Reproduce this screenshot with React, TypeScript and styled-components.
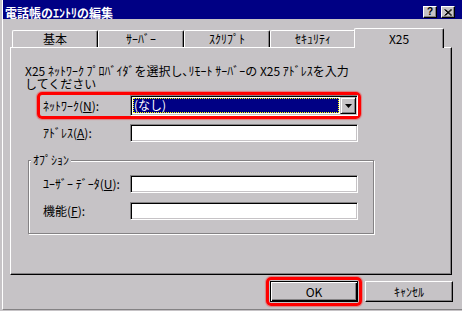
import React from 'react'
import styled, { createGlobalStyle } from 'styled-components'

const FACE = '#c6c3c6'
const SHADOW = '#848284'
const NAVY = '#000084'

const GlobalStyle = createGlobalStyle`
  html, body {
    margin: 0;
    padding: 0;
    background: ${FACE};
  }
  body {
    font-family: 'Noto Sans CJK JP', 'Noto Sans', sans-serif;
    font-size: 12px;
    color: #000;
  }
  * {
    box-sizing: border-box;
  }
`

const tabs = ['基本', 'ｻｰﾊﾞｰ', 'ｽｸﾘﾌﾟﾄ', 'ｾｷｭﾘﾃｨ', 'X25']

const App: React.FC = () => {
  return (
    <Screen>
      <GlobalStyle />
      <Frame>
        <TitleBar>
          <Title>電話帳のｴﾝﾄﾘの編集</Title>
          <CaptionButtons>
            <CaptionButton>?</CaptionButton>
            <CaptionButton>
              <svg width="8" height="7" viewBox="0 0 8 7">
                <path d="M0.5 0.5 L7 6.5 M1.5 0.5 L8 6.5 M7 0.5 L0.5 6.5 M8 0.5 L1.5 6.5" stroke="#000" strokeWidth="1" />
              </svg>
            </CaptionButton>
          </CaptionButtons>
        </TitleBar>

        <TabStrip>
          {tabs.map((t, i) => (
            <Tab key={t} $active={i === tabs.length - 1}>{t}</Tab>
          ))}
        </TabStrip>

        <Panel>
          <Description>
            <span>X25 ﾈｯﾄﾜｰｸ ﾌﾟﾛﾊﾞｲﾀﾞを選択し､ﾘﾓｰﾄ ｻｰﾊﾞｰの X25 ｱﾄﾞﾚｽを入力</span>
            <span>してください</span>
          </Description>

          <Highlight $pad="0 0 0 3px" $ml="26px">
            <FieldRow $h={21}>
              <FieldLabel>ﾈｯﾄﾜｰｸ(<u>N</u>):</FieldLabel>
              <ComboBox>
                <ComboValue>(なし)</ComboValue>
                <DropButton>
                  <svg width="7" height="4" viewBox="0 0 7 4">
                    <path d="M0 0 H7 L3.5 4 Z" fill="#000" />
                  </svg>
                </DropButton>
              </ComboBox>
            </FieldRow>
          </Highlight>

          <FieldRow $h={18} $mt={5} $ml={32}>
            <FieldLabel>ｱﾄﾞﾚｽ(<u>A</u>):</FieldLabel>
            <TextBox />
          </FieldRow>

          <GroupBox>
            <GroupCaption>ｵﾌﾟｼｮﾝ</GroupCaption>
            <FieldRow $h={18} $mt={9} $ml={14}>
              <FieldLabel>ﾕｰｻﾞｰ ﾃﾞｰﾀ(<u>U</u>):</FieldLabel>
              <TextBox />
            </FieldRow>
            <FieldRow $h={18} $mt={9} $ml={14}>
              <FieldLabel>機能(<u>F</u>):</FieldLabel>
              <TextBox />
            </FieldRow>
          </GroupBox>
        </Panel>

        <ButtonRow>
          <Highlight $pad="1px" $m="-4px">
            <PushButton $default>OK</PushButton>
          </Highlight>
          <PushButton>ｷｬﾝｾﾙ</PushButton>
        </ButtonRow>
      </Frame>
    </Screen>
  )
}

const Screen = styled.div`
  width: 462px;
  height: 311px;
  padding-left: 2px;
  background: ${FACE};
  overflow: hidden;
`

const Frame = styled.div`
  height: 310px;
  display: flex;
  flex-direction: column;
  border-left: 1px solid #fff;
  border-bottom: 1px solid ${SHADOW};
`

const TitleBar = styled.div`
  height: 19px;
  flex-shrink: 0;
  background: ${NAVY};
  display: flex;
  align-items: center;
  padding: 5px 7px 0 2px;
`

const Title = styled.div`
  color: #fff;
  font-weight: bold;
  font-size: 12px;
  line-height: 13px;
  white-space: nowrap;
`

const CaptionButtons = styled.div`
  margin-left: auto;
  display: flex;
  gap: 4px;
`

const CaptionButton = styled.div`
  width: 14px;
  height: 12px;
  background: ${FACE};
  border-top: 1px solid #fff;
  border-left: 1px solid #fff;
  border-right: 1px solid #000;
  border-bottom: 1px solid #000;
  box-shadow: inset -1px -1px 0 ${SHADOW};
  display: flex;
  align-items: center;
  justify-content: center;
  font-family: 'Liberation Sans', sans-serif;
  font-weight: bold;
  font-size: 10px;
  line-height: 10px;
`

const TabStrip = styled.div`
  height: 19px;
  margin-top: 9px;
  padding-left: 9px;
  display: flex;
  align-items: flex-end;
  flex-shrink: 0;
`

const Tab = styled.div<{ $active?: boolean }>`
  width: ${p => (p.$active ? 90 : 86)}px;
  height: ${p => (p.$active ? 20 : 17)}px;
  margin-left: ${p => (p.$active ? -2 : 0)}px;
  margin-bottom: ${p => (p.$active ? -1 : 0)}px;
  position: relative;
  z-index: ${p => (p.$active ? 1 : 0)};
  background: ${FACE};
  border-top: 1px solid #fff;
  border-left: 1px solid #fff;
  border-right: 1px solid #000;
  border-radius: 2px 2px 0 0;
  box-shadow: inset -1px 0 0 ${SHADOW};
  display: flex;
  align-items: center;
  justify-content: center;
  line-height: 12px;
  white-space: nowrap;
`

const Panel = styled.div`
  width: 442px;
  height: 228px;
  margin-left: 7px;
  flex-shrink: 0;
  border-top: 1px solid #fff;
  border-left: 1px solid #fff;
  border-right: 1px solid #000;
  border-bottom: 1px solid #000;
  box-shadow: inset -1px -1px 0 ${SHADOW};
  display: flex;
  flex-direction: column;
  align-items: flex-start;
`

const Description = styled.div`
  margin: 16px 0 0 14px;
  display: flex;
  flex-direction: column;
  line-height: 13px;
  white-space: nowrap;
`

const Highlight = styled.div<{ $pad: string; $ml?: string; $m?: string }>`
  margin: ${p => p.$m ?? `2px 0 0 ${p.$ml ?? '0'}`};
  padding: ${p => p.$pad};
  border: 3px solid #ff0000;
  border-radius: 5px;
  box-shadow: 0 0 1px 1px rgba(255, 0, 0, 0.35);
  display: flex;
`

const FieldRow = styled.div<{ $h: number; $mt?: number; $ml?: number }>`
  display: grid;
  grid-template-columns: 87px 228px;
  align-items: center;
  height: ${p => p.$h}px;
  margin-top: ${p => p.$mt ?? 0}px;
  margin-left: ${p => p.$ml ?? 0}px;
`

const FieldLabel = styled.label`
  line-height: 12px;
  white-space: nowrap;

  u {
    text-underline-offset: 1px;
  }
`

const sunken = `
  border-top: 1px solid ${SHADOW};
  border-left: 1px solid ${SHADOW};
  border-right: 1px solid #fff;
  border-bottom: 1px solid #fff;
  box-shadow: inset 1px 1px 0 #000, inset -1px -1px 0 ${FACE};
`

const TextBox = styled.div`
  height: 18px;
  background: #fff;
  ${sunken}
`

const ComboBox = styled.div`
  height: 21px;
  background: #fff;
  ${sunken}
  padding: 1px;
  display: flex;
`

const ComboValue = styled.div`
  flex: 1;
  margin: 1px 1px 1px 1px;
  background: ${NAVY};
  outline: 1px dotted #ffff00;
  outline-offset: -1px;
  color: #fff;
  line-height: 13px;
  padding-left: 1px;
  white-space: nowrap;
`

const DropButton = styled.div`
  width: 16px;
  background: ${FACE};
  border-top: 1px solid ${FACE};
  border-left: 1px solid ${FACE};
  border-right: 1px solid #000;
  border-bottom: 1px solid #000;
  box-shadow: inset 1px 1px 0 #fff, inset -1px -1px 0 ${SHADOW};
  display: flex;
  align-items: center;
  justify-content: center;
`

const GroupBox = styled.div`
  width: 346px;
  margin: 18px 0 0 17px;
  padding-bottom: 13px;
  border: 1px solid ${SHADOW};
  box-shadow: 1px 1px 0 #fff, inset 1px 1px 0 #fff;
`

const GroupCaption = styled.div`
  width: fit-content;
  margin: -7px 0 0 2px;
  padding: 0 2px;
  background: ${FACE};
  line-height: 12px;
  white-space: nowrap;
`

const ButtonRow = styled.div`
  margin-top: 6px;
  padding-right: 9px;
  display: flex;
  justify-content: flex-end;
  gap: 7px;
`

const PushButton = styled.button<{ $default?: boolean }>`
  width: 88px;
  height: 21px;
  padding: 0;
  background: ${FACE};
  font: inherit;
  font-size: 12px;
  line-height: 12px;
  color: #000;
  ${p =>
    p.$default
      ? `
    border: 1px solid #000;
    box-shadow: inset 1px 1px 0 #fff, inset -1px -1px 0 #000, inset -2px -2px 0 ${SHADOW};
  `
      : `
    border-top: 1px solid #fff;
    border-left: 1px solid #fff;
    border-right: 1px solid #000;
    border-bottom: 1px solid #000;
    box-shadow: inset -1px -1px 0 ${SHADOW};
  `}
`

export default App
